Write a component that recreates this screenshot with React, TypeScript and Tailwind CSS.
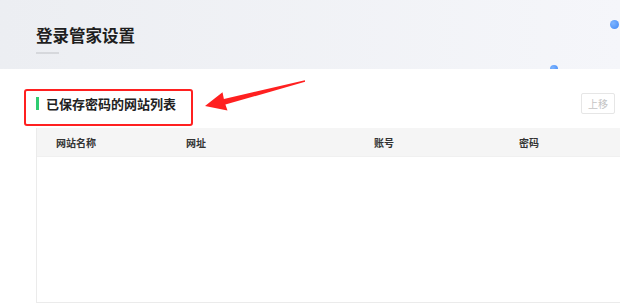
import React from "react";

export default function App() {
  const font = { fontFamily: '"Noto Sans CJK SC", "Noto Sans", sans-serif' };
  return (
    <div className="relative w-[620px] h-[304px] overflow-hidden bg-white" style={font}>
      {/* Header */}
      <div className="relative h-[69px] overflow-hidden bg-gradient-to-r from-[#eceef2] to-[#f5f6fa] pl-[36px] pt-[26px]">
        <div className="text-[16.5px] leading-[18px] font-bold text-[#1f1f1f]">登录管家设置</div>
        <div className="mt-[8px] w-[23px] h-[2px] bg-[#d6d8dc]" />
        <div className="absolute left-[610px] top-[20px] w-[9px] h-[9px] rounded-full bg-[radial-gradient(circle_at_35%_35%,#7db4ff,#3f87f5)] blur-[0.4px]" />
        <div className="absolute left-[550px] top-[65px] w-[8px] h-[8px] rounded-full bg-[radial-gradient(circle_at_35%_35%,#7db4ff,#3f87f5)] blur-[0.4px]" />
      </div>

      {/* Section */}
      <div className="pt-[24px]">
        <div className="flex items-center justify-between h-[21px] pl-[36px] pr-[5px]">
          <div className="flex items-center">
            <div className="w-[3px] h-[13px] bg-[#2ecc71] mr-[7px]" />
            <div className="text-[13px] leading-[16px] font-bold text-[#222]">已保存密码的网站列表</div>
          </div>
          <button className="w-[34px] h-[21px] border border-[#e6e6e6] rounded-[2px] bg-white text-[10px] text-[#c4c4c4] leading-none">
            上移
          </button>
        </div>

        <div className="mt-[14px] ml-[36px] border-l border-b border-[#ebebeb]">
          <div className="flex items-center h-[29px] bg-[#f5f5f5] border-b border-[#f0f0f0] text-[10px] font-semibold text-[#333]">
            <div className="w-[130px] pl-[19px]">网站名称</div>
            <div className="w-[188px] pl-[19px]">网址</div>
            <div className="w-[145px] pl-[19px]">账号</div>
            <div className="flex-1 pl-[19px]">密码</div>
          </div>
          <div className="h-[145px] bg-white" />
        </div>
      </div>

      {/* Annotation overlay */}
      <div className="absolute left-[24px] top-[89px] w-[169px] h-[37px] border-2 border-[#ff2020] rounded-[3px] pointer-events-none" />
      <svg className="absolute left-0 top-0 pointer-events-none" width="620" height="304">
        <polygon
          points="205,106 227.5,110.5 225.4,104.6 305.1,81.7 304.9,80.3 223.9,99.0 222.5,92.2"
          fill="#ff2020"
        />
      </svg>
    </div>
  );
}
